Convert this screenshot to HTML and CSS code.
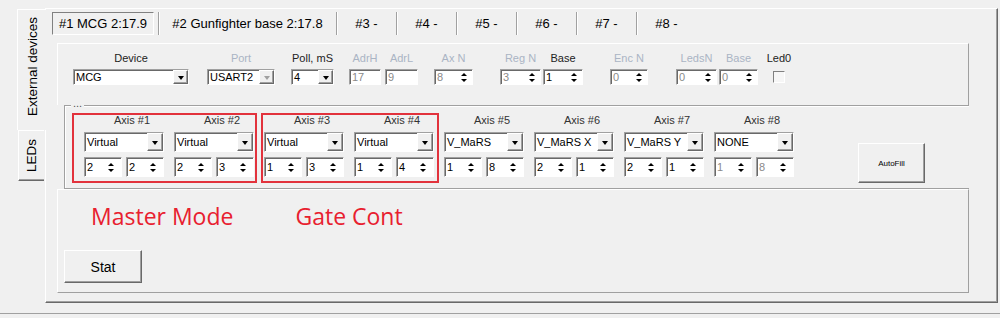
FILE: index.html
```html
<!doctype html>
<html lang="en">
  <head>
    <meta charset="UTF-8" />
    <meta name="viewport" content="width=device-width, initial-scale=1.0" />
    <title>External devices</title>
    <link rel="stylesheet" href="styles.css">
  </head>
  <body>
    <div class="window">
      <div class="side-tabs">
        <div class="side-tab active"><span>External devices</span></div>
        <div class="side-tab"><span>LEDs</span></div>
      </div>

      <div class="page">
        <div class="dev-tabs">
          <div class="dev-tab pressed">#1 MCG 2:17.9</div>
          <div class="dev-tab wide">#2 Gunfighter base 2:17.8</div>
          <div class="dev-tab">#3 -</div>
          <div class="dev-tab">#4 -</div>
          <div class="dev-tab">#5 -</div>
          <div class="dev-tab">#6 -</div>
          <div class="dev-tab">#7 -</div>
          <div class="dev-tab">#8 -</div>
        </div>

        <div class="panel device-row">
          <div class="field f-device">
            <label>Device</label>
            <div class="combo"><span>MCG</span><i class="drop"></i></div>
          </div>
          <div class="field f-port">
            <label class="off">Port</label>
            <div class="combo"><span>USART2</span><i class="drop off"></i></div>
          </div>
          <div class="field f-poll">
            <label>Poll, mS</label>
            <div class="combo"><span>4</span><i class="drop"></i></div>
          </div>
          <div class="field f-adrh">
            <label class="off">AdrH</label>
            <div class="edit off"><span>17</span></div>
          </div>
          <div class="field f-adrl">
            <label class="off">AdrL</label>
            <div class="edit off"><span>9</span></div>
          </div>
          <div class="field f-axn">
            <label class="off">Ax N</label>
            <div class="spin off"><span>8</span><i class="updown"></i></div>
          </div>
          <div class="field f-regn">
            <label class="off">Reg N</label>
            <div class="spin off"><span>3</span><i class="updown"></i></div>
          </div>
          <div class="field f-base">
            <label>Base</label>
            <div class="spin"><span>1</span><i class="updown"></i></div>
          </div>
          <div class="field f-encn">
            <label class="off">Enc N</label>
            <div class="spin off"><span>0</span><i class="updown"></i></div>
          </div>
          <div class="field f-ledsn">
            <label class="off">LedsN</label>
            <div class="spin off"><span>0</span><i class="updown"></i></div>
          </div>
          <div class="field f-base2">
            <label class="off">Base</label>
            <div class="spin off"><span>0</span><i class="updown"></i></div>
          </div>
          <div class="field f-led0">
            <label>Led0</label>
            <div class="check"></div>
          </div>
        </div>

        <div class="axes">
          <span class="caption">...</span>

          <div class="axis">
            <label>Axis #1</label>
            <div class="combo"><span>Virtual</span><i class="drop"></i></div>
            <div class="spins">
              <div class="spin"><span>2</span><i class="updown"></i></div>
              <div class="spin"><span>2</span><i class="updown"></i></div>
            </div>
          </div>
          <div class="axis">
            <label>Axis #2</label>
            <div class="combo"><span>Virtual</span><i class="drop"></i></div>
            <div class="spins">
              <div class="spin"><span>2</span><i class="updown"></i></div>
              <div class="spin"><span>3</span><i class="updown"></i></div>
            </div>
          </div>
          <div class="axis">
            <label>Axis #3</label>
            <div class="combo"><span>Virtual</span><i class="drop"></i></div>
            <div class="spins">
              <div class="spin"><span>1</span><i class="updown"></i></div>
              <div class="spin"><span>3</span><i class="updown"></i></div>
            </div>
          </div>
          <div class="axis">
            <label>Axis #4</label>
            <div class="combo"><span>Virtual</span><i class="drop"></i></div>
            <div class="spins">
              <div class="spin"><span>1</span><i class="updown"></i></div>
              <div class="spin"><span>4</span><i class="updown"></i></div>
            </div>
          </div>
          <div class="axis">
            <label>Axis #5</label>
            <div class="combo"><span>V_MaRS</span><i class="drop"></i></div>
            <div class="spins">
              <div class="spin"><span>1</span><i class="updown"></i></div>
              <div class="spin"><span>8</span><i class="updown"></i></div>
            </div>
          </div>
          <div class="axis">
            <label>Axis #6</label>
            <div class="combo"><span>V_MaRS X</span><i class="drop"></i></div>
            <div class="spins">
              <div class="spin"><span>2</span><i class="updown"></i></div>
              <div class="spin"><span>1</span><i class="updown"></i></div>
            </div>
          </div>
          <div class="axis">
            <label>Axis #7</label>
            <div class="combo"><span>V_MaRS Y</span><i class="drop"></i></div>
            <div class="spins">
              <div class="spin"><span>2</span><i class="updown"></i></div>
              <div class="spin"><span>1</span><i class="updown"></i></div>
            </div>
          </div>
          <div class="axis">
            <label>Axis #8</label>
            <div class="combo"><span>NONE</span><i class="drop"></i></div>
            <div class="spins">
              <div class="spin off"><span>1</span><i class="updown"></i></div>
              <div class="spin off"><span>8</span><i class="updown"></i></div>
            </div>
          </div>

          <button class="btn autofill">AutoFill</button>

          <!-- annotation frames drawn over the axis columns -->
          <div class="mark mark-master"></div>
          <div class="mark mark-gate"></div>
        </div>

        <div class="panel bottom-panel">
          <div class="notes">
            <span>Master Mode</span>
            <span>Gate Cont</span>
          </div>
          <button class="btn stat">Stat</button>
        </div>
      </div>
    </div>
    <div class="frame-edge"></div>
  </body>
</html>
```

FILE: styles.css
```css
body {
  margin: 0;
  background-color: #f0f0f0;
  font-family: 'Liberation Sans', Arial, sans-serif;
  font-size: 11px;
  color: #1a1a1a;
}
.window {
  display: flex;
  padding-top: 8px;
}

/* vertical tabs on the left */
.side-tabs {
  width: 28px;
  margin-left: 17px;
  padding-top: 1px;
  display: flex;
  flex-direction: column;
  position: relative;
  z-index: 1;
}
.side-tab {
  box-sizing: border-box;
  display: flex;
  align-items: center;
  justify-content: center;
  font-size: 13.5px;
  color: #000;
  background-color: #f0f0f0;
}
.side-tab span {
  writing-mode: vertical-rl;
  transform: rotate(180deg);
}
.side-tab.active {
  width: 29px;
  height: 121px;
  border-top: 1px solid #fff;
  border-left: 1px solid #fff;
  padding-bottom: 6px;
}
.side-tab:not(.active) {
  width: 26px;
  height: 51px;
  margin-left: 1px;
  border-top: 1px solid #fff;
  border-left: 1px solid #fff;
  border-bottom: 1px solid #696969;
  box-shadow: inset 0 -1px #a0a0a0;
}

/* tab page */
.page {
  width: 953px;
  height: 295px;
  box-sizing: border-box;
  border: 1px solid;
  border-color: #fff #696969 #696969 #fff;
  box-shadow: inset -1px -1px #a0a0a0;
  padding-top: 3px;
}
.dev-tabs {
  display: flex;
  height: 23px;
  margin-left: 6px;
  font-size: 13px;
  color: #000;
}
.dev-tab {
  width: 60px;
  box-sizing: border-box;
  display: flex;
  align-items: center;
  justify-content: center;
  white-space: nowrap;
  border-left: 1px solid #a0a0a0;
  box-shadow: inset 1px 0 #fff;
}
.dev-tab.pressed {
  width: 102px;
  margin-right: 4px;
  border: 1px solid;
  border-color: #808080 #fff #fff #808080;
  box-shadow: none;
}
.dev-tab.wide {
  width: 178px;
}

/* raised panels */
.panel {
  margin-left: 11px;
  width: 912px;
  box-sizing: border-box;
  border-top: 1px solid #fff;
  border-left: 1px solid #fff;
  border-right: 1px solid #a0a0a0;
}
.device-row {
  margin-top: 8px;
  height: 62px;
  padding-top: 8px;
  display: flex;
}
.field {
  display: flex;
  flex-direction: column;
}
.field label,
.axis label {
  line-height: 13px;
  text-align: center;
  white-space: nowrap;
  color: #222;
}
label.off {
  color: #aab4c4;
}
.field .combo,
.field .edit,
.field .spin {
  margin-top: 4px;
  height: 16px;
}
.f-device { margin-left: 15px; width: 116px; }
.f-port { margin-left: 18px; width: 68px; }
.f-poll { margin-left: 16px; width: 43px; }
.f-adrh { margin-left: 15px; width: 32px; }
.f-adrl { margin-left: 4px; width: 33px; }
.f-axn { margin-left: 16px; width: 39px; }
.f-regn { margin-left: 27px; width: 41px; }
.f-base { margin-left: 2px; width: 40px; }
.f-encn { margin-left: 27px; width: 38px; }
.f-ledsn { margin-left: 28px; width: 41px; }
.f-base2 { margin-left: 2px; width: 39px; }
.f-led0 { margin-left: 8px; width: 26px; }

/* sunken controls */
.combo,
.edit,
.spin {
  display: flex;
  align-items: center;
  box-sizing: border-box;
  background-color: #fff;
  border: 1px solid;
  border-color: #a0a0a0 #fff #fff #a0a0a0;
  box-shadow: inset 1px 1px #696969;
  color: #000;
}
.combo span,
.edit span,
.spin span {
  flex: 1;
  padding-left: 2px;
  white-space: nowrap;
  overflow: hidden;
}
.edit.off,
.spin.off {
  color: #8a8a8a;
}
.drop {
  align-self: stretch;
  width: 15px;
  box-sizing: border-box;
  display: flex;
  align-items: center;
  justify-content: center;
  background-color: #f0f0f0;
  border: 1px solid;
  border-color: #fff #696969 #696969 #fff;
  box-shadow: inset -1px -1px #a0a0a0;
}
.drop::after {
  content: "";
  border-left: 3px solid transparent;
  border-right: 3px solid transparent;
  border-top: 4px solid #000;
  margin-top: 1px;
}
.drop.off::after {
  border-top-color: #a0a0a0;
}
.updown {
  display: flex;
  flex-direction: column;
  gap: 3px;
  margin-right: 5px;
}
.updown::before,
.updown::after {
  content: "";
  border-left: 3px solid transparent;
  border-right: 3px solid transparent;
}
.updown::before {
  border-bottom: 3px solid #000;
}
.updown::after {
  border-top: 3px solid #000;
}
.check {
  width: 12px;
  height: 12px;
  box-sizing: border-box;
  margin: 6px 0 0 7px;
  background-color: #f6f6f6;
  border: 1px solid;
  border-color: #808080 #fff #fff #808080;
}

/* axis group */
.axes {
  position: relative;
  margin-left: 18px;
  width: 905px;
  height: 84px;
  box-sizing: border-box;
  border-top: 1px solid #a0a0a0;
  border-left: 1px solid #a0a0a0;
  border-bottom: 1px solid #a0a0a0;
  box-shadow: inset 1px 1px #fff;
  padding: 8px 0 0 19px;
  display: flex;
  align-items: flex-start;
  gap: 10px;
}
.caption {
  position: absolute;
  left: 6px;
  top: -9px;
  padding: 0 2px;
  line-height: 12px;
  background-color: #f0f0f0;
  color: #555;
}
.axis {
  width: 80px;
  display: flex;
  flex-direction: column;
}
.axis label {
  padding-left: 16px;
  color: #333;
}
.axis .combo {
  height: 20px;
  margin-top: 5px;
}
.axis .drop {
  width: 16px;
}
.spins {
  display: flex;
  gap: 4px;
  margin-top: 5px;
}
.spins .spin {
  width: 38px;
  height: 20px;
}
.spins .updown {
  margin-right: 7px;
}
.mark {
  position: absolute;
  top: 7px;
  height: 70px;
  box-sizing: border-box;
  border: 2px solid #e2323c;
}
.mark-master {
  left: 7px;
  width: 185px;
}
.mark-gate {
  left: 196px;
  width: 178px;
}

/* buttons */
.btn {
  font: inherit;
  color: #000;
  background-color: #f0f0f0;
  border: 1px solid;
  border-color: #fff #696969 #696969 #fff;
  box-shadow: inset -1px -1px #a0a0a0;
  padding: 0;
}
.autofill {
  margin-left: 54px;
  margin-top: 29px;
  width: 67px;
  height: 40px;
  font-size: 8px;
}
.bottom-panel {
  height: 104px;
  border-bottom: 1px solid #a0a0a0;
  padding: 13px 0 0 6px;
}
.notes {
  display: flex;
  gap: 62px;
  margin-left: 27px;
  font-family: 'Open Sans', 'Noto Sans', sans-serif;
  font-size: 23px;
  line-height: 26px;
  color: #e8202f;
}
.stat {
  display: block;
  margin-top: 21px;
  width: 78px;
  height: 33px;
  font-size: 14px;
}
.frame-edge {
  margin-top: 10px;
  border-top: 1px solid #a0a0a0;
  box-shadow: 0 1px #fff;
}
```
